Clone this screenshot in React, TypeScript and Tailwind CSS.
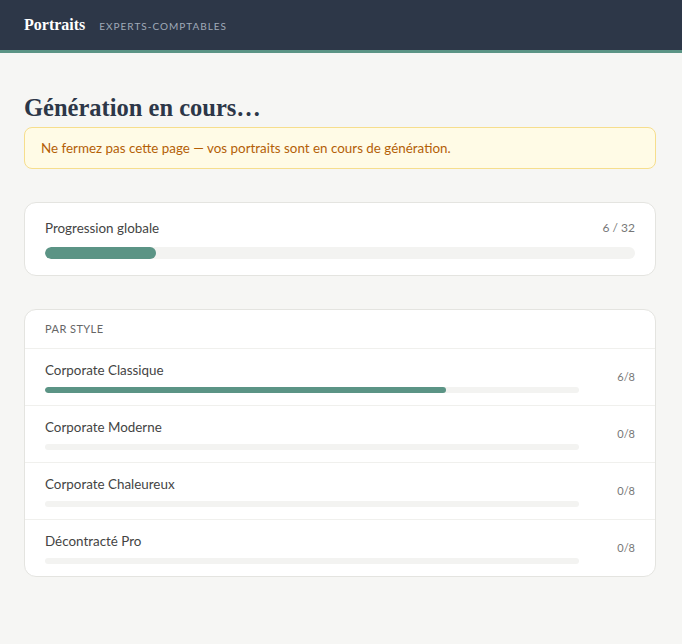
const STYLES = [
  { label: 'Corporate Classique', done: 6, total: 8 },
  { label: 'Corporate Moderne', done: 0, total: 8 },
  { label: 'Corporate Chaleureux', done: 0, total: 8 },
  { label: 'Décontracté Pro', done: 0, total: 8 },
];

const sans = "font-['Lato','Noto_Sans',sans-serif]";
const serif = "font-['Liberation_Serif','DejaVu_Serif',serif]";

export default function App() {
  const done = 6;
  const total = 32;

  return (
    <div className={`min-h-[644px] bg-[#f6f6f4] ${sans}`}>
      {/* Header */}
      <header className="h-[53px] bg-[#2d3748] border-b-[3px] border-[#5b9485] flex items-center px-6 gap-3.5">
        <span className={`${serif} text-[16px] font-bold text-white`}>Portraits</span>
        <span className="text-[10px] tracking-[0.1em] text-[#a0aab8] mt-0.5">EXPERTS-COMPTABLES</span>
      </header>

      <main className="pl-6 pr-[26px] pt-10">
        <h1 className={`${serif} text-[24.5px] leading-[30px] font-bold text-[#2d3748]`}>Génération en cours…</h1>

        <div className="mt-1 rounded-lg border border-[#f6de8d] bg-[#fffbe6] px-4 py-[11px] text-[13.4px] leading-[18px] text-[#b45f06]">
          Ne fermez pas cette page — vos portraits sont en cours de génération.
        </div>

        {/* Global progress */}
        <div className="mt-[33px] rounded-xl border border-[#e4e4e0] bg-white px-5 pt-4 pb-4">
          <div className="flex items-center justify-between mb-2.5">
            <span className="text-[13.4px] leading-[18px] text-[#444]">Progression globale</span>
            <span className="text-[12px] leading-[18px] text-[#777]">{done} / {total}</span>
          </div>
          <div className="h-3 rounded-full bg-[#f3f3f1] overflow-hidden">
            <div className="h-full rounded-full bg-[#5b9485]" style={{ width: `${(done / total) * 100}%` }} />
          </div>
        </div>

        {/* Per style */}
        <div className="mt-[33px] rounded-xl border border-[#e4e4e0] bg-white overflow-hidden">
          <div className="px-5 py-3 text-[11px] leading-[14px] tracking-[0.04em] text-[#666] border-b border-[#f0f0ed]">
            PAR STYLE
          </div>
          {STYLES.map((s, i) => (
            <div
              key={s.label}
              className={`flex items-center px-5 pt-3 pb-3 ${i < STYLES.length - 1 ? 'border-b border-[#f0f0ed]' : ''}`}
            >
              <div className="flex-1">
                <div className="text-[13.4px] leading-[18px] text-[#444] mb-2">{s.label}</div>
                <div className="h-1.5 rounded-full bg-[#f3f3f1] overflow-hidden">
                  <div className="h-full rounded-full bg-[#5b9485]" style={{ width: `${(s.done / s.total) * 100}%` }} />
                </div>
              </div>
              <div className="w-14 text-right text-[11px] text-[#777]">{s.done}/{s.total}</div>
            </div>
          ))}
        </div>
      </main>
    </div>
  );
}
